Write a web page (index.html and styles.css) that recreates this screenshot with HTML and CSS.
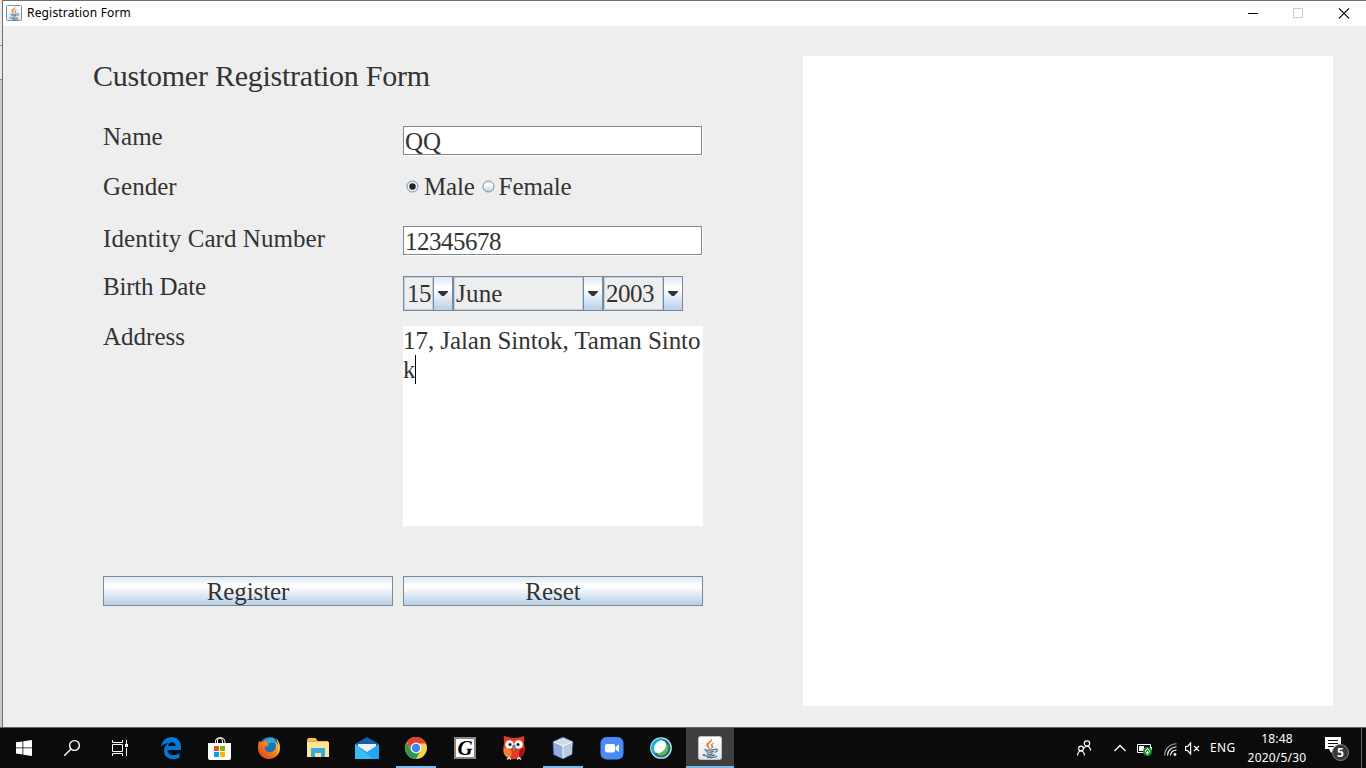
FILE: index.html
```html
<!DOCTYPE html>
<html lang="en">
<head>
<meta charset="utf-8">
<title>Registration Form</title>
<link rel="stylesheet" href="styles.css">
</head>
<body>
<svg class="defs" width="0" height="0">
  <defs>
    <linearGradient id="tile" x1="0" y1="0" x2="0" y2="1"><stop offset="0" stop-color="#fff"/><stop offset="1" stop-color="#e3e7ea"/></linearGradient>
    <symbol id="java" viewBox="0 0 24 24">
      <path d="M13.6 3.2c1 2.600-4.600 4-3.200 7 .4 1 1.300 1.700 1.700 2.700-3.500-2-4.700-3.700-2.500-6 1.400-1.400 3.400-2 4-3.700zM16 6.800c-2.600 1-3.500 2-2.500 3.400.7 1 .3 1.800-.6 2.600 2.700-1.300 2.300-2.600 1.400-3.700-.5-.7.300-1.300 1.700-2.300z" fill="#ea7125" stroke="#ea7125" stroke-width=".5"/>
      <path d="M7.500 13c-3 1.300 6 1.600 9.500.4M8 15.200c.6 1.200 5.500 1.200 7.700.1M8.700 17.500c.5 1.100 4.300 1 6 .1M17 13.300c3.200-.8 3 2.200-.4 3M6.800 18.300c-5.300 1.200 4.800 2.800 10.400.6M9 21.300c4 .5 8.600.3 10.200-1.200" fill="none" stroke="#50748f" stroke-width="1.300"/>
    </symbol>
  </defs>
</svg>
<div class="desktop">
  <div class="workspace">
    <div class="edge"><i></i><i></i><i></i></div>
    <main class="window">
      <header class="titlebar">
        <svg class="app-icon" width="16" height="16" viewBox="0 0 16 16"><rect x=".5" y=".5" width="15" height="15" rx="1" fill="url(#tile)" stroke="#7891a5"/><use href="#java" width="16" height="16"/></svg>
        <h1 class="caption">Registration Form</h1>
        <svg class="controls" width="120" height="25" viewBox="0 0 120 25" fill="none" stroke="#000">
          <path d="M2 12.500h10"/><path d="M47.500 7.500h9v9h-9z" stroke="#ccc"/><path d="M93 7.300l10 10M103 7.300l-10 10" stroke-width="1.200"/>
        </svg>
      </header>
      <div class="content">
        <form class="form">
          <h2 class="heading">Customer Registration Form</h2>
          <div class="row"><label class="label">Name</label><div class="field"><div class="input">QQ</div></div></div>
          <div class="row"><label class="label">Gender</label><div class="radios">
            <svg width="13" height="13" viewBox="0 0 13 13"><circle cx="6.500" cy="6.500" r="5.500" fill="#e8f0f8" stroke="#7a8a99"/><circle cx="6.500" cy="6.500" r="3.200" fill="#222"/></svg><span class="male">Male</span>
            <svg width="13" height="13" viewBox="0 0 13 13"><defs><linearGradient id="rad" x1="0" y1="0" x2="0" y2="1"><stop offset="0" stop-color="#dde8f3"/><stop offset=".35" stop-color="#fff"/><stop offset="1" stop-color="#b8cfe5"/></linearGradient></defs><circle cx="6.500" cy="6.500" r="5.500" fill="url(#rad)" stroke="#7a8a99"/></svg><span class="female">Female</span>
          </div></div>
          <div class="row"><label class="label identity">Identity Card Number</label><div class="field"><div class="input digits">12345678</div></div></div>
          <div class="row"><label class="label birth">Birth Date</label><div class="field combos">
            <div class="combo day"><span class="value">15</span><span class="drop"><svg width="10" height="5" viewBox="0 0 10 5"><path d="M0 0h10v1L6 5H4L0 1z" fill="#333"/></svg></span></div>
            <div class="combo month"><span class="value">June</span><span class="drop"><svg width="10" height="5" viewBox="0 0 10 5"><path d="M0 0h10v1L6 5H4L0 1z" fill="#333"/></svg></span></div>
            <div class="combo year"><span class="value">2003</span><span class="drop"><svg width="10" height="5" viewBox="0 0 10 5"><path d="M0 0h10v1L6 5H4L0 1z" fill="#333"/></svg></span></div>
          </div></div>
          <div class="row tall"><label class="label">Address</label><div class="field"><div class="textarea">17, Jalan Sintok, Taman Sinto<br>k<span class="caret"></span></div></div></div>
          <div class="actions"><button type="button" class="button register">Register</button><button type="button" class="button reset">Reset</button></div>
        </form>
        <section class="preview"></section>
      </div>
    </main>
  </div>
  <footer class="taskbar">
    <div class="item"><svg width="16" height="16" viewBox="0 0 16 16" fill="#fff"><path d="M0 2.300l6.500-.9v6.100H0zM7.300 1.300L16 0v7.500H7.300zM0 8.300h6.500v6.200L0 13.600zM7.300 8.300H16V16l-8.700-1.300z"/></svg></div>
    <div class="item"><svg width="18" height="18" viewBox="0 0 18 18" fill="none" stroke="#fff" stroke-width="1.400"><circle cx="11.500" cy="6.500" r="4.900"/><path d="M8 10l-6.800 6.800"/></svg></div>
    <div class="item"><svg width="18" height="18" viewBox="0 0 18 18" fill="none" stroke="#fff"><path d="M1.500 1v2.500h10V1M1.500 5.500h10v7h-10zM1.500 17v-2.500h10V17M15.500 1v4.500M15.500 9v8"/><path d="M14 5h3v3h-3z" fill="#fff" stroke="none"/></svg></div>
    <div class="apps">
      <div class="item"><svg width="22" height="24" viewBox="0 0 22 24"><path d="M1 11C2 4.500 6 1 11.500 1 18 1 21 6 21 11v3H7.500c0 6 7.500 6 12 3.200v4.500c-6 3-15.500 1.500-15.500-6.700 0-4 2.200-6.600 5.300-8C5 7.300 2.500 8.500 1 11zm7-1h7.500c0-5-6.500-5-7.500 0z" fill="#0078d7" fill-rule="evenodd"/></svg></div>
      <div class="item"><svg class="store" width="24" height="24" viewBox="0 0 24 24"><path d="M0 7h23v15q0 2-2 2H2q-2 0-2-2z" fill="#fff"/><path d="M7.500 7V5q0-3 3.500-3t3.500 3v2M9.500 7V4q0-2.500 3-2.500 4 0 4.500 4V7" fill="none" stroke="#fff"/><path d="M6 10h5v5H6z" fill="#f25022"/><path d="M12 10h5v5h-5z" fill="#7fba00"/><path d="M6 16h5v5H6z" fill="#00a4ef"/><path d="M12 16h5v5h-5z" fill="#ffb900"/></svg></div>
      <div class="item"><svg width="24" height="24" viewBox="0 0 24 24"><defs><linearGradient id="fox" x1="1" y1="0" x2="0" y2="1"><stop stop-color="#ffd63b"/><stop offset=".45" stop-color="#f58220"/><stop offset="1" stop-color="#d5391f"/></linearGradient></defs><circle cx="12.500" cy="11.500" r="10.500" fill="#1874ba"/><path d="M10 3c3-2 6-1 8 0-1 2 0 3 1 4-5-1-7 1-9 0z" fill="#32a9df"/><path d="M2 5l2 1 3-.5C8 3 9 3.500 10 3 8.500 5 9.500 7 12 8l-1.500 2-3 1c0 4 5 7 9 4 3-2 3-6 1-10 5 4 7 10 3 14-5 6-14 5-18-1-2-4-2-8-.5-13z" fill="url(#fox)"/><path d="M19 2c5 5 5 12 1 17 2-6 2-11-1-17z" fill="#ffc83b"/></svg></div>
      <div class="item"><svg width="22" height="20" viewBox="0 0 22 20"><path d="M0 1h9l2 2h10v16H0z" fill="#e8b83e"/><path d="M1 0h8v2H1z" fill="#f7c84b"/><path d="M0 4h22v15H0z" fill="#ffe697"/><path d="M4 11q0-1 1-1h12q1 0 1 1v8h-4v-4H8v4H4z" fill="#36a9df"/></svg></div>
      <div class="item"><svg width="24" height="24" viewBox="0 0 24 24"><path d="M0 8l12-7 12 7v8H0z" fill="#1460ad"/><path d="M3 8h18v10H3z" fill="#f1f1f5"/><path d="M0 8l12 8 12-8v15H0z" fill="#24a5ed"/><path d="M0 8v15h18z" fill="#38bdf5"/></svg></div>
      <div class="item running"><svg width="24" height="24" viewBox="0 0 24 24"><circle cx="12" cy="12" r="11" fill="#fbd14b"/><path d="M12 12L2.500 6.500C6-1 18-1 22 7.500H12z" fill="#e34133"/><path d="M2.500 6.500l5 8h3L12 7.500H3z" fill="#e34133"/><path d="M2.500 6.500C-2 15 5 23 12 23l4.500-8.500H7z" fill="#269b50"/><circle cx="12" cy="12" r="5.400" fill="#fff"/><circle cx="12" cy="12" r="4.200" fill="#4284f3"/></svg></div>
      <div class="item"><svg width="22" height="22" viewBox="0 0 22 22"><path d="M1 1h20v20H1z" fill="#fff" stroke="#888" stroke-width="2"/><text x="3.500" y="18" class="g-letter">G</text></svg></div>
      <div class="item"><svg width="24" height="26" viewBox="0 0 24 26"><path d="M2 1c4 1 7 2 10 2s7-1 10-2c1 3-.5 5 0 8 2 6 1 15-10 15S0 15 2 9c.5-3-1-5 0-8z" fill="#e33b20"/><path d="M2 13c3-1 5 2 7 2 2 6-1 7-2 8-5-2-6-6-5-10z" fill="#f48432"/><path d="M22 13c-4 0-5 2-5 10 4-1 6-5 5-10z" fill="#a80f17"/><circle cx="7.500" cy="9.500" r="4.300" fill="#fff"/><circle cx="16.500" cy="9.500" r="4.300" fill="#fff"/><circle cx="8" cy="9.500" r="1.500" fill="#111"/><circle cx="16" cy="9.500" r="1.500" fill="#111"/><path d="M10 11l2-2 2 2-2 6z" fill="#789"/><path d="M5 24.500l2-2 2 2M15 24.500l2-2 2 2" fill="none" stroke="#ddd" stroke-width="1.500"/></svg></div>
      <div class="item running"><svg width="24" height="24" viewBox="0 0 24 24"><path d="M12 1l10 4.500-1 13L12 23 2.500 18.500 2 5.500z" fill="#dce9ed" stroke="#29408f"/><path d="M2.500 6L12 10v12.500l-9-4.500z" fill="#90afe0"/><path d="M12 10l9.500-4-1 12-8.500 4.500z" fill="#bccbdc"/><path d="M12 1.700L21 6l-9 4-9-4z" fill="#cddfdb"/><path d="M3 6l9 4 9-4M12 10v12" fill="none" stroke="#f2f8ff"/></svg></div>
      <div class="item"><svg width="24" height="24" viewBox="0 0 24 24"><rect x=".5" y="1" width="23" height="22.500" rx="6" fill="#4a8cf6"/><rect x="5" y="8" width="10" height="8.500" rx="2" fill="#fff"/><path d="M15.500 11L19 8.500v7.500l-3.500-2.500z" fill="#fff"/></svg></div>
      <div class="item"><svg width="24" height="24" viewBox="0 0 24 24"><circle cx="12" cy="12" r="10.200" fill="#087591" stroke="#d6e4e7" stroke-width="1.300"/><path d="M2.500 14C1 7 7 1 14 3l-8 16q-3-2-3.500-5z" fill="#08b7e3"/><ellipse cx="13.300" cy="13.300" rx="7" ry="5.500" transform="rotate(-48 13.300 13.300)" fill="#6bb54a"/><ellipse cx="11" cy="10.800" rx="7" ry="5.300" transform="rotate(-48 11 10.800)" fill="#fff"/></svg></div>
      <div class="item active"><svg width="24" height="24" viewBox="0 0 24 24"><rect x=".5" y=".5" width="23" height="23" rx="2" fill="url(#tile)" stroke="#bcc3c8"/><use href="#java" width="24" height="24"/></svg></div>
    </div>
    <div class="tray">
      <svg class="people" width="16" height="16" viewBox="0 0 16 16" fill="none" stroke="#fff" stroke-width="1.200"><circle cx="11" cy="3.500" r="2.700"/><circle cx="5" cy="8.500" r="2.400"/><path d="M1.500 15.500q.5-4.500 3.500-4.500t3.500 4.500M7.500 8.500Q11 4.500 13.500 7.500q1 1.500 1.200 3"/></svg>
      <svg class="chevron" width="12" height="8" viewBox="0 0 12 8" fill="none" stroke="#fff" stroke-width="1.300"><path d="M.5 7L6 1.500 11.500 7"/></svg>
      <svg class="battery" width="16" height="13" viewBox="0 0 16 13"><path d="M.5 1.500h13v8H.5z" fill="none" stroke="#fff"/><path d="M2 3h5v5H2zM14 4h1v3h-1z" fill="#fff"/><circle cx="10.500" cy="8.500" r="4.500" fill="#12912c"/><path d="M10.500 11.500V8M10.500 5.500q-4 4 0 4.500 4-.5 0-4.500z" fill="none" stroke="#fff"/></svg>
      <svg class="wifi" width="13" height="13" viewBox="0 0 13 13" fill="none" stroke="#fff" stroke-width="1.100"><path d="M.7 12.500C.7 6 6 .7 12.500.7" opacity=".65"/><path d="M3.500 12.500q.5-8 9-8.800M6.500 12.500q.5-5 6-5.500"/><circle cx="11" cy="11.500" r="1.400" fill="#fff" stroke="none"/></svg>
      <svg class="volume" width="15" height="13" viewBox="0 0 15 13" fill="none" stroke="#fff" stroke-width="1.200"><path d="M.6 4.500h2l3-3.500v11l-3-3.500h-2zM9 4l5 5M14 4L9 9"/></svg>
      <span class="lang">ENG</span>
      <div class="clock"><span class="time">18:48</span><span class="date">2020/5/30</span></div>
      <svg class="notify" width="25" height="25" viewBox="0 0 25 25"><path d="M0 1h16v12H9l-3 4-2-4H0z" fill="#fff"/><path d="M3 4.500h10M3 7.500h10M3 10.500h6" stroke="#111"/><circle cx="15.500" cy="16.500" r="8" fill="#35383b" stroke="#888"/><text x="15.500" y="21" class="badge">5</text></svg>
      <span class="peek"></span>
    </div>
  </footer>
</div>
</body>
</html>
```

FILE: styles.css
```css
* { box-sizing: border-box; }
body { margin: 0; overflow: hidden; color: #333; background: #eee; font-family: "Liberation Serif", serif; font-size: 25px; line-height: 30px; }
svg { display: block; flex: none; }
.defs { position: absolute; }
.desktop { width: 1366px; height: 768px; display: flex; flex-direction: column; }
.workspace { height: 728px; display: flex; border-bottom: 1px solid #666; }
.edge { width: 2px; display: grid; grid-template-rows: 46px 34px 1fr; background: #e8e8e8; }
.edge i { border-bottom: 1px solid #888; }
.edge i:last-child { background: #c9c9c9; border: 0; }
.window { flex: 1; display: flex; flex-direction: column; border-left: 1px solid #6e6e6e; border-top: 1px solid #6e6e6e; background: #eee; }
.titlebar { height: 25px; display: flex; align-items: center; background: #fff; padding-left: 3px; }
.app-icon { margin-bottom: 1px; }
.caption { margin: 0 auto 2px 5px; font: 12px/23px "Noto Sans", sans-serif; letter-spacing: .17px; color: #000; }
.content { flex: 1; display: flex; padding-top: 30px; }
.form { width: 800px; padding-left: 100px; flex: none; }
.heading { margin: 5px 0 0 -10px; height: 61px; font-size: 30px; font-weight: 400; line-height: 30px; letter-spacing: -.25px; }
.row { height: 50px; display: flex; }
.row.tall { height: 250px; }
.label { width: 300px; white-space: nowrap; }
.identity { padding-top: 2px; letter-spacing: .07px; }
.birth { letter-spacing: -.2px; }
.field { padding-top: 4px; }
.input { width: 299px; height: 29px; border: 1px solid #7a8a99; background: #fff; box-shadow: 1px 1px 0 #fff; padding-left: 1px; line-height: 29px; }
.digits { letter-spacing: -.5px; }
.radios { display: flex; align-items: flex-start; padding-left: 3px; }
.radios svg { margin-top: 8px; }
.male { margin: 0 7px 0 5px; letter-spacing: -.2px; }
.female { margin-left: 4px; letter-spacing: -.1px; }
.combos { display: flex; }
.combo { height: 35px; display: flex; border: 1px solid #7a8a99; }
.day { width: 50px; letter-spacing: -.5px; }
.month { width: 150px; letter-spacing: .2px; }
.year { width: 80px; letter-spacing: -.5px; }
.value { flex: 1; border: 1px solid #b8cfe5; line-height: 31px; padding-left: 1px; }
.day .value { padding-left: 2px; }
.drop { width: 19px; border-left: 1px solid #7a8a99; display: grid; place-items: center; }
.drop, .button { background: linear-gradient(#dde8f3, #fff 30%, #fff 35%, #b8cfe5); }
.textarea { width: 300px; height: 200px; background: #fff; line-height: 29px; letter-spacing: -.06px; white-space: nowrap; }
.caret { display: inline-block; width: 1px; height: 29px; margin-left: -.5px; background: #000; vertical-align: top; }
.actions { display: flex; gap: 10px; padding-top: 4px; }
.button { height: 30px; border: 1px solid #7a8a99; padding: 1px 0 0; color: #333; font: 25px/28px "Liberation Serif", serif; }
.register { width: 290px; letter-spacing: -.1px; }
.reset { width: 300px; }
.preview { width: 530px; height: 650px; background: #fff; }
.taskbar { height: 40px; display: flex; background: #0b0b0b; color: #fff; font-family: "Noto Sans", sans-serif; }
.item { width: 48px; height: 40px; display: grid; place-items: center; }
.apps { display: flex; gap: 1px; margin-left: 3px; }
.running { background: linear-gradient(#76b9ed, #76b9ed) 50% 100% / 40px 2px no-repeat; }
.active { background: #3f3f3f; box-shadow: inset 0 -2px #76b9ed; }
.g-letter { font: italic bold 21px "Liberation Serif", serif; fill: #000; }
.tray { display: flex; align-items: center; margin-left: auto; }
.chevron { margin-left: 22px; }
.battery { margin-left: 11px; margin-top: 2px; }
.wifi { margin-left: 11px; margin-top: 2px; }
.volume { margin-left: 8px; }
.lang { width: 27px; margin-left: 10px; font-size: 12px; line-height: 38px; letter-spacing: .3px; }
.clock { width: 60px; margin-left: 10px; display: flex; flex-direction: column; text-align: center; font-size: 12px; line-height: 19px; letter-spacing: .2px; }
.notify { margin-left: 18px; }
.badge { font: bold 12px "Noto Sans", sans-serif; text-anchor: middle; fill: #fff; }
.peek { width: 5px; height: 40px; margin-left: 11px; border-left: 1px solid #666; }
```
